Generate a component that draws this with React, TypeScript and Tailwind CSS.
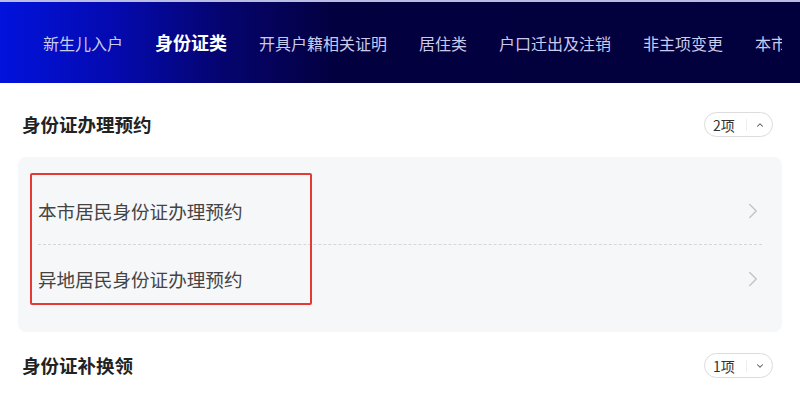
import { ChevronRight, ChevronUp, ChevronDown } from "lucide-react";

const tabs = ["新生儿入户", "身份证类", "开具户籍相关证明", "居住类", "户口迁出及注销", "非主项变更", "本市户口"];

function CountBadge({ count, open }: { count: number; open: boolean }) {
  return (
    <div className="flex h-[25px] w-[69px] items-center rounded-full border border-[#dcdcdc] bg-white pl-[8px] pr-[7px] text-[14px] text-[#333]">
      <span className="leading-none">{count}项</span>
      <span className="ml-auto mr-[8px] h-[12px] w-px bg-[#eeeeee]" />
      {open ? (
        <ChevronUp className="h-[10px] w-[10px] text-[#555]" strokeWidth={2.5} />
      ) : (
        <ChevronDown className="h-[10px] w-[10px] text-[#555]" strokeWidth={2.5} />
      )}
    </div>
  );
}

export default function App() {
  return (
    <main
      className="h-[400px] w-[800px] overflow-hidden bg-white"
      style={{ fontFamily: '"Noto Sans CJK SC", "Noto Sans", sans-serif' }}
    >
      {/* top nav */}
      <header className="flex h-[83px] items-center border-t-2 border-[#b9bde3] bg-[linear-gradient(90deg,#0212dc_0%,#040ab0_14%,#05046e_28%,#03003f_42%,#02003c_100%)] pl-[43px] pr-[18px]">
        <nav className="flex min-w-0 flex-1 items-center gap-8 overflow-hidden whitespace-nowrap">
          {tabs.map((t) => (
            <span
              key={t}
              className={
                t === "身份证类"
                  ? "shrink-0 text-[18px] font-bold text-white"
                  : "shrink-0 text-[16px] text-[#c9cbec]"
              }
            >
              {t}
            </span>
          ))}
        </nav>
      </header>

      <div className="px-[18px]">
        {/* section 1 */}
        <div className="mt-[29px] flex h-[25px] items-center justify-between pl-1 pr-[9px]">
          <h2 className="text-[18.5px] font-bold text-[#222]">身份证办理预约</h2>
          <CountBadge count={2} open />
        </div>

        <div className="relative mt-[20px] rounded-lg bg-[#f6f7f9] px-5 pt-5 pb-[19px]">
          {["本市居民身份证办理预约", "异地居民身份证办理预约"].map((item, i) => (
            <div
              key={item}
              className={
                i === 0
                  ? "flex h-[68px] items-center justify-between border-b border-dashed border-[#d6d6d6]"
                  : "flex h-[68px] items-center justify-between"
              }
            >
              <span className="text-[18.6px] text-[#444]">{item}</span>
              <ChevronRight className="-mr-[4px] h-[26px] w-[26px] text-[#c6c6c6]" strokeWidth={1.4} />
            </div>
          ))}

          {/* red highlight box */}
          <div className="pointer-events-none absolute top-[16px] left-[12px] h-[132px] w-[282px] rounded-[2px] border-2 border-[#e53935]" />
        </div>

        {/* section 2 */}
        <div className="mt-[21px] flex h-[25px] items-center justify-between pl-1 pr-[9px]">
          <h2 className="text-[18.5px] font-bold text-[#222]">身份证补换领</h2>
          <CountBadge count={1} open={false} />
        </div>
      </div>
    </main>
  );
}
